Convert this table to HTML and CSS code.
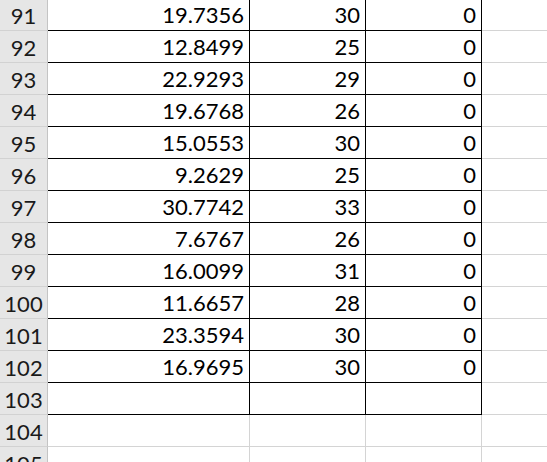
FILE: index.html
```html
<!DOCTYPE html>
<html>
<head>
<meta charset="utf-8">
<link rel="stylesheet" href="styles.css">
</head>
<body>
<div class="sheet">
  <div class="rh">91</div><div class="c a b">19.7356</div><div class="c b">30</div><div class="c b">0</div><div class="c g"></div>
  <div class="rh">92</div><div class="c a b">12.8499</div><div class="c b">25</div><div class="c b">0</div><div class="c g"></div>
  <div class="rh">93</div><div class="c a b">22.9293</div><div class="c b">29</div><div class="c b">0</div><div class="c g"></div>
  <div class="rh">94</div><div class="c a b">19.6768</div><div class="c b">26</div><div class="c b">0</div><div class="c g"></div>
  <div class="rh">95</div><div class="c a b">15.0553</div><div class="c b">30</div><div class="c b">0</div><div class="c g"></div>
  <div class="rh">96</div><div class="c a b">9.2629</div><div class="c b">25</div><div class="c b">0</div><div class="c g"></div>
  <div class="rh">97</div><div class="c a b">30.7742</div><div class="c b">33</div><div class="c b">0</div><div class="c g"></div>
  <div class="rh">98</div><div class="c a b">7.6767</div><div class="c b">26</div><div class="c b">0</div><div class="c g"></div>
  <div class="rh">99</div><div class="c a b">16.0099</div><div class="c b">31</div><div class="c b">0</div><div class="c g"></div>
  <div class="rh">100</div><div class="c a b">11.6657</div><div class="c b">28</div><div class="c b">0</div><div class="c g"></div>
  <div class="rh">101</div><div class="c a b">23.3594</div><div class="c b">30</div><div class="c b">0</div><div class="c g"></div>
  <div class="rh">102</div><div class="c a b">16.9695</div><div class="c b">30</div><div class="c b">0</div><div class="c g"></div>
  <div class="rh">103</div><div class="c a b"></div><div class="c b"></div><div class="c b"></div><div class="c g"></div>
  <div class="rh">104</div><div class="c a g"></div><div class="c g"></div><div class="c g"></div><div class="c g"></div>
  <div class="rh">105</div><div class="c a g"></div><div class="c g"></div><div class="c g"></div><div class="c g"></div>
</div>
</body>
</html>
```

FILE: styles.css
```css
html, body {
  margin: 0;
  padding: 0;
  background: #ffffff;
  overflow: hidden;
}
.sheet {
  display: grid;
  grid-template-columns: 48px 202px 116px 116px 80px;
  grid-auto-rows: 32px;
  margin-top: -1px;
  font-family: "Lato", "Liberation Sans", sans-serif;
  font-size: 22px;
  color: #000;
}
.rh {
  box-sizing: border-box;
  background: #e6e6e6;
  border-right: 1px solid #c4c4c4;
  border-bottom: 1px solid #d2d2d2;
  text-align: center;
  line-height: 31px;
  padding-top: 1px;
  color: #1a1a1a;
}
.c {
  box-sizing: border-box;
  text-align: right;
  padding-right: 5px;
  padding-top: 1px;
  line-height: 30px;
}
.b {
  border-right: 1px solid #000;
  border-bottom: 1px solid #000;
}
.g {
  border-right: 1px solid #d4d4d4;
  border-bottom: 1px solid #d4d4d4;
}
```
